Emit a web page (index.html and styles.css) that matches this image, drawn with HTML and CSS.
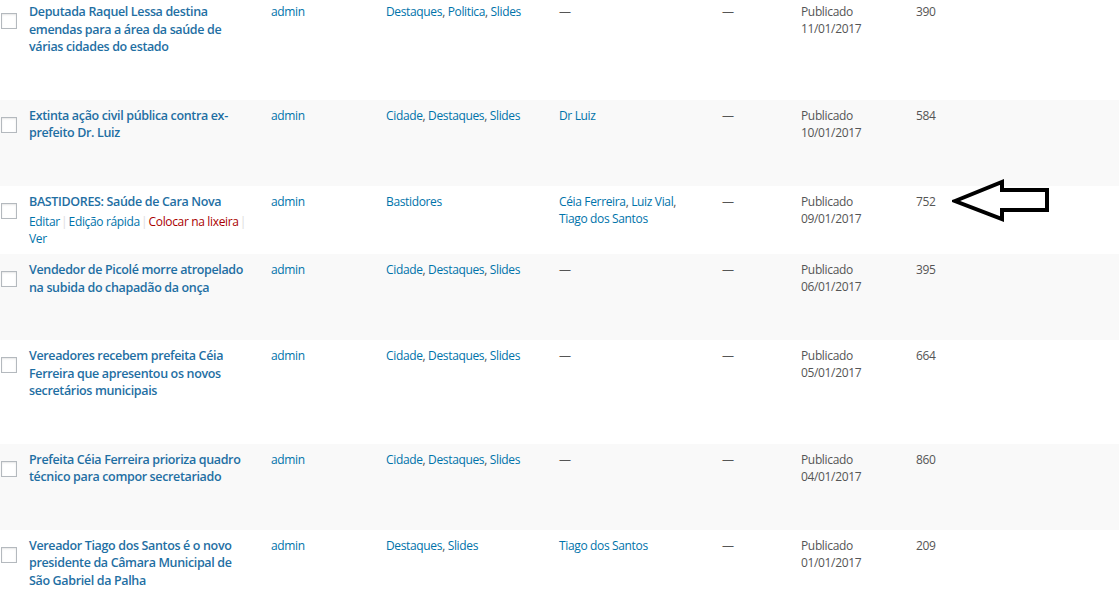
FILE: index.html
```html
<!DOCTYPE html>
<html lang="pt-BR">
<head>
    <meta charset="UTF-8">
    <title>Posts</title>
    <link rel="stylesheet" href="styles.css">
</head>
<body>
<table class="posts">
    <colgroup>
        <col class="col-cb">
        <col class="col-title">
        <col class="col-author">
        <col class="col-cats">
        <col class="col-tags">
        <col class="col-comments">
        <col class="col-date">
        <col class="col-views">
    </colgroup>
    <tbody>
    <tr>
        <th class="check"><span class="cb"></span></th>
        <td class="title">
            <a class="row-title" href="#">Deputada Raquel Lessa destina emendas para a área da saúde de várias cidades do estado</a>
            <div class="row-actions"><span><a href="#">Editar</a>&nbsp;|</span> <span><a href="#">Edição rápida</a>&nbsp;|</span> <span><a class="trash" href="#">Colocar na lixeira</a>&nbsp;|</span> <span><a href="#">Ver</a></span></div>
        </td>
        <td><a href="#">admin</a></td>
        <td><a href="#">Destaques</a>, <a href="#">Politica</a>, <a href="#">Slides</a></td>
        <td>—</td>
        <td>—</td>
        <td>Publicado<br>11/01/2017</td>
        <td>390</td>
    </tr>
    <tr>
        <th class="check"><span class="cb"></span></th>
        <td class="title">
            <a class="row-title" href="#">Extinta ação civil pública contra ex-prefeito Dr. Luiz</a>
            <div class="row-actions"><span><a href="#">Editar</a>&nbsp;|</span> <span><a href="#">Edição rápida</a>&nbsp;|</span> <span><a class="trash" href="#">Colocar na lixeira</a>&nbsp;|</span> <span><a href="#">Ver</a></span></div>
        </td>
        <td><a href="#">admin</a></td>
        <td><a href="#">Cidade</a>, <a href="#">Destaques</a>, <a href="#">Slides</a></td>
        <td><a href="#">Dr Luiz</a></td>
        <td>—</td>
        <td>Publicado<br>10/01/2017</td>
        <td>584</td>
    </tr>
    <tr class="hover">
        <th class="check"><span class="cb"></span></th>
        <td class="title">
            <a class="row-title" href="#">BASTIDORES: Saúde de Cara Nova</a>
            <div class="row-actions"><span><a href="#">Editar</a>&nbsp;|</span> <span><a href="#">Edição rápida</a>&nbsp;|</span> <span><a class="trash" href="#">Colocar na lixeira</a>&nbsp;|</span> <span><a href="#">Ver</a></span></div>
        </td>
        <td><a href="#">admin</a></td>
        <td><a href="#">Bastidores</a></td>
        <td><a href="#">Céia Ferreira</a>, <a href="#">Luiz Vial</a>, <a href="#">Tiago dos Santos</a></td>
        <td>—</td>
        <td>Publicado<br>09/01/2017</td>
        <td class="views">
            752
            <svg class="arrow" width="100" height="44" viewBox="0 0 100 44">
                <path d="M3 22 L50 3 L50 11 L95 11 L95 31 L50 31 L50 40 Z" fill="none" stroke="#000" stroke-width="4" stroke-linejoin="miter"/>
            </svg>
        </td>
    </tr>
    <tr>
        <th class="check"><span class="cb"></span></th>
        <td class="title">
            <a class="row-title" href="#">Vendedor de Picolé morre atropelado na subida do chapadão da onça</a>
            <div class="row-actions"><span><a href="#">Editar</a>&nbsp;|</span> <span><a href="#">Edição rápida</a>&nbsp;|</span> <span><a class="trash" href="#">Colocar na lixeira</a>&nbsp;|</span> <span><a href="#">Ver</a></span></div>
        </td>
        <td><a href="#">admin</a></td>
        <td><a href="#">Cidade</a>, <a href="#">Destaques</a>, <a href="#">Slides</a></td>
        <td>—</td>
        <td>—</td>
        <td>Publicado<br>06/01/2017</td>
        <td>395</td>
    </tr>
    <tr>
        <th class="check"><span class="cb"></span></th>
        <td class="title">
            <a class="row-title" href="#">Vereadores recebem prefeita Céia Ferreira que apresentou os novos secretários municipais</a>
            <div class="row-actions"><span><a href="#">Editar</a>&nbsp;|</span> <span><a href="#">Edição rápida</a>&nbsp;|</span> <span><a class="trash" href="#">Colocar na lixeira</a>&nbsp;|</span> <span><a href="#">Ver</a></span></div>
        </td>
        <td><a href="#">admin</a></td>
        <td><a href="#">Cidade</a>, <a href="#">Destaques</a>, <a href="#">Slides</a></td>
        <td>—</td>
        <td>—</td>
        <td>Publicado<br>05/01/2017</td>
        <td>664</td>
    </tr>
    <tr>
        <th class="check"><span class="cb"></span></th>
        <td class="title">
            <a class="row-title" href="#">Prefeita Céia Ferreira prioriza quadro técnico para compor secretariado</a>
            <div class="row-actions"><span><a href="#">Editar</a>&nbsp;|</span> <span><a href="#">Edição rápida</a>&nbsp;|</span> <span><a class="trash" href="#">Colocar na lixeira</a>&nbsp;|</span> <span><a href="#">Ver</a></span></div>
        </td>
        <td><a href="#">admin</a></td>
        <td><a href="#">Cidade</a>, <a href="#">Destaques</a>, <a href="#">Slides</a></td>
        <td>—</td>
        <td>—</td>
        <td>Publicado<br>04/01/2017</td>
        <td>860</td>
    </tr>
    <tr>
        <th class="check"><span class="cb"></span></th>
        <td class="title">
            <a class="row-title" href="#">Vereador Tiago dos Santos é o novo presidente da Câmara Municipal de São Gabriel da Palha</a>
            <div class="row-actions"><span><a href="#">Editar</a>&nbsp;|</span> <span><a href="#">Edição rápida</a>&nbsp;|</span> <span><a class="trash" href="#">Colocar na lixeira</a>&nbsp;|</span> <span><a href="#">Ver</a></span></div>
        </td>
        <td><a href="#">admin</a></td>
        <td><a href="#">Destaques</a>, <a href="#">Slides</a></td>
        <td><a href="#">Tiago dos Santos</a></td>
        <td>—</td>
        <td>Publicado<br>01/01/2017</td>
        <td>209</td>
    </tr>
    </tbody>
</table>
</body>
</html>
```

FILE: styles.css
```css
body {
    margin: 0;
    background: #fff;
    font-family: "Open Sans", "Noto Sans", sans-serif;
    font-size: 12px;
    letter-spacing: -0.35px;
    color: #555;
    overflow: hidden;
}
a {
    color: #0073aa;
    text-decoration: none;
}
.posts {
    width: 100%;
    margin-top: -4px;
    border-collapse: collapse;
    table-layout: fixed;
}
.col-cb { width: 19px; }
.col-title { width: 242px; }
.col-author { width: 115px; }
.col-cats { width: 173px; }
.col-tags { width: 163px; }
.col-comments { width: 79px; }
.col-date { width: 115px; }
.posts tbody tr:nth-child(even) {
    background: #f9f9f9;
}
.posts td, .posts th {
    vertical-align: top;
    text-align: left;
    padding: 7px 10px 7px;
    line-height: 17px;
}
.posts td.title {
    padding-right: 8px;
}
.posts th.check {
    padding: 17px 0 0 1px;
}
.cb {
    display: block;
    width: 14px;
    height: 14px;
    border: 1px solid #b4b9be;
    background: #fff;
    box-shadow: inset 0 1px 2px rgba(0, 0, 0, 0.1);
}
.row-title {
    font-size: 12.5px;
    font-weight: 600;
    line-height: 17.5px;
    color: #1f6fa3;
}
.row-actions {
    padding-top: 3px;
    color: #ddd;
    word-spacing: -1.5px;
    visibility: hidden;
}
.row-actions a {
    word-spacing: 0;
}
.hover .row-actions {
    visibility: visible;
}
.row-actions .trash {
    color: #a00;
}
.views {
    position: relative;
}
.arrow {
    position: absolute;
    left: 46px;
    top: -7px;
}
```
